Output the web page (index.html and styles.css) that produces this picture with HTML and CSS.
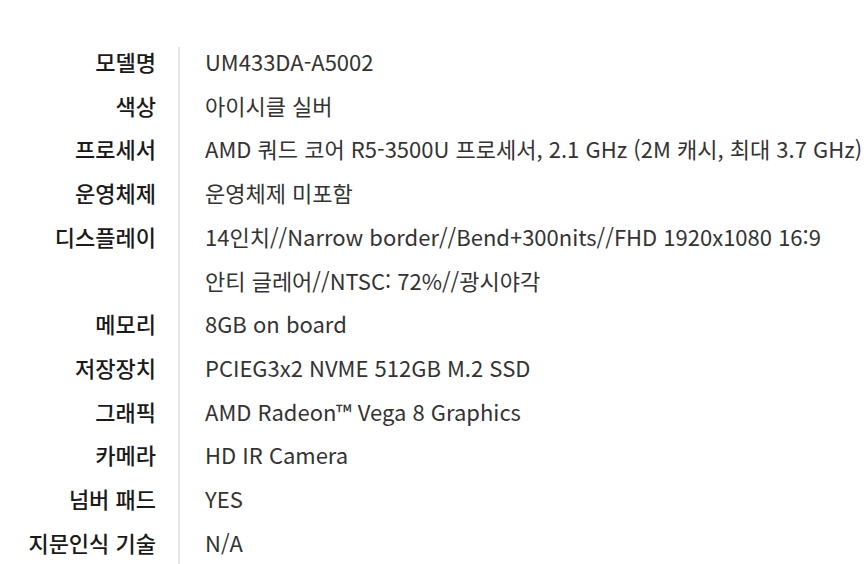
FILE: index.html
```html
<!DOCTYPE html>
<html lang="ko">
<head>
<meta charset="utf-8">
<link rel="stylesheet" href="styles.css">
</head>
<body>
<dl class="spec">
  <dt>모델명</dt><dd>UM433DA-A5002</dd>
  <dt>색상</dt><dd>아이시클 실버</dd>
  <dt>프로세서</dt><dd>AMD 쿼드 코어 R5-3500U 프로세서, 2.1 GHz (2M 캐시, 최대 3.7 GHz)</dd>
  <dt>운영체제</dt><dd>운영체제 미포함</dd>
  <dt>디스플레이</dt><dd>14인치//Narrow border//Bend+300nits//FHD 1920x1080 16:9<br>안티 글레어//NTSC: 72%//광시야각</dd>
  <dt>메모리</dt><dd>8GB on board</dd>
  <dt>저장장치</dt><dd>PCIEG3x2 NVME 512GB M.2 SSD</dd>
  <dt>그래픽</dt><dd>AMD Radeon™ Vega 8 Graphics</dd>
  <dt>카메라</dt><dd>HD IR Camera</dd>
  <dt>넘버 패드</dt><dd>YES</dd>
  <dt>지문인식 기술</dt><dd>N/A</dd>
</dl>
</body>
</html>
```
FILE: styles.css
```css
html, body {
  margin: 0;
  padding: 0;
  background: #fff;
}
body {
  font-family: "Noto Sans CJK KR", "Noto Sans", sans-serif;
}
.spec {
  margin: 0;
  padding-top: 40px;
  display: grid;
  grid-template-columns: 178px 1fr;
  font-size: 22px;
  line-height: 43.7px;
  background-image: linear-gradient(#e6e6e6, #e6e6e6);
  background-repeat: no-repeat;
  background-size: 2px calc(100% - 47px);
  background-position: 178px 47px;
}
.spec dt {
  margin: 0;
  padding-right: 22px;
  text-align: right;
  font-weight: 500;
  color: #1a1a1a;
}
.spec dd {
  margin: 0;
  padding-left: 27px;
  color: #333;
  white-space: nowrap;
}
```
